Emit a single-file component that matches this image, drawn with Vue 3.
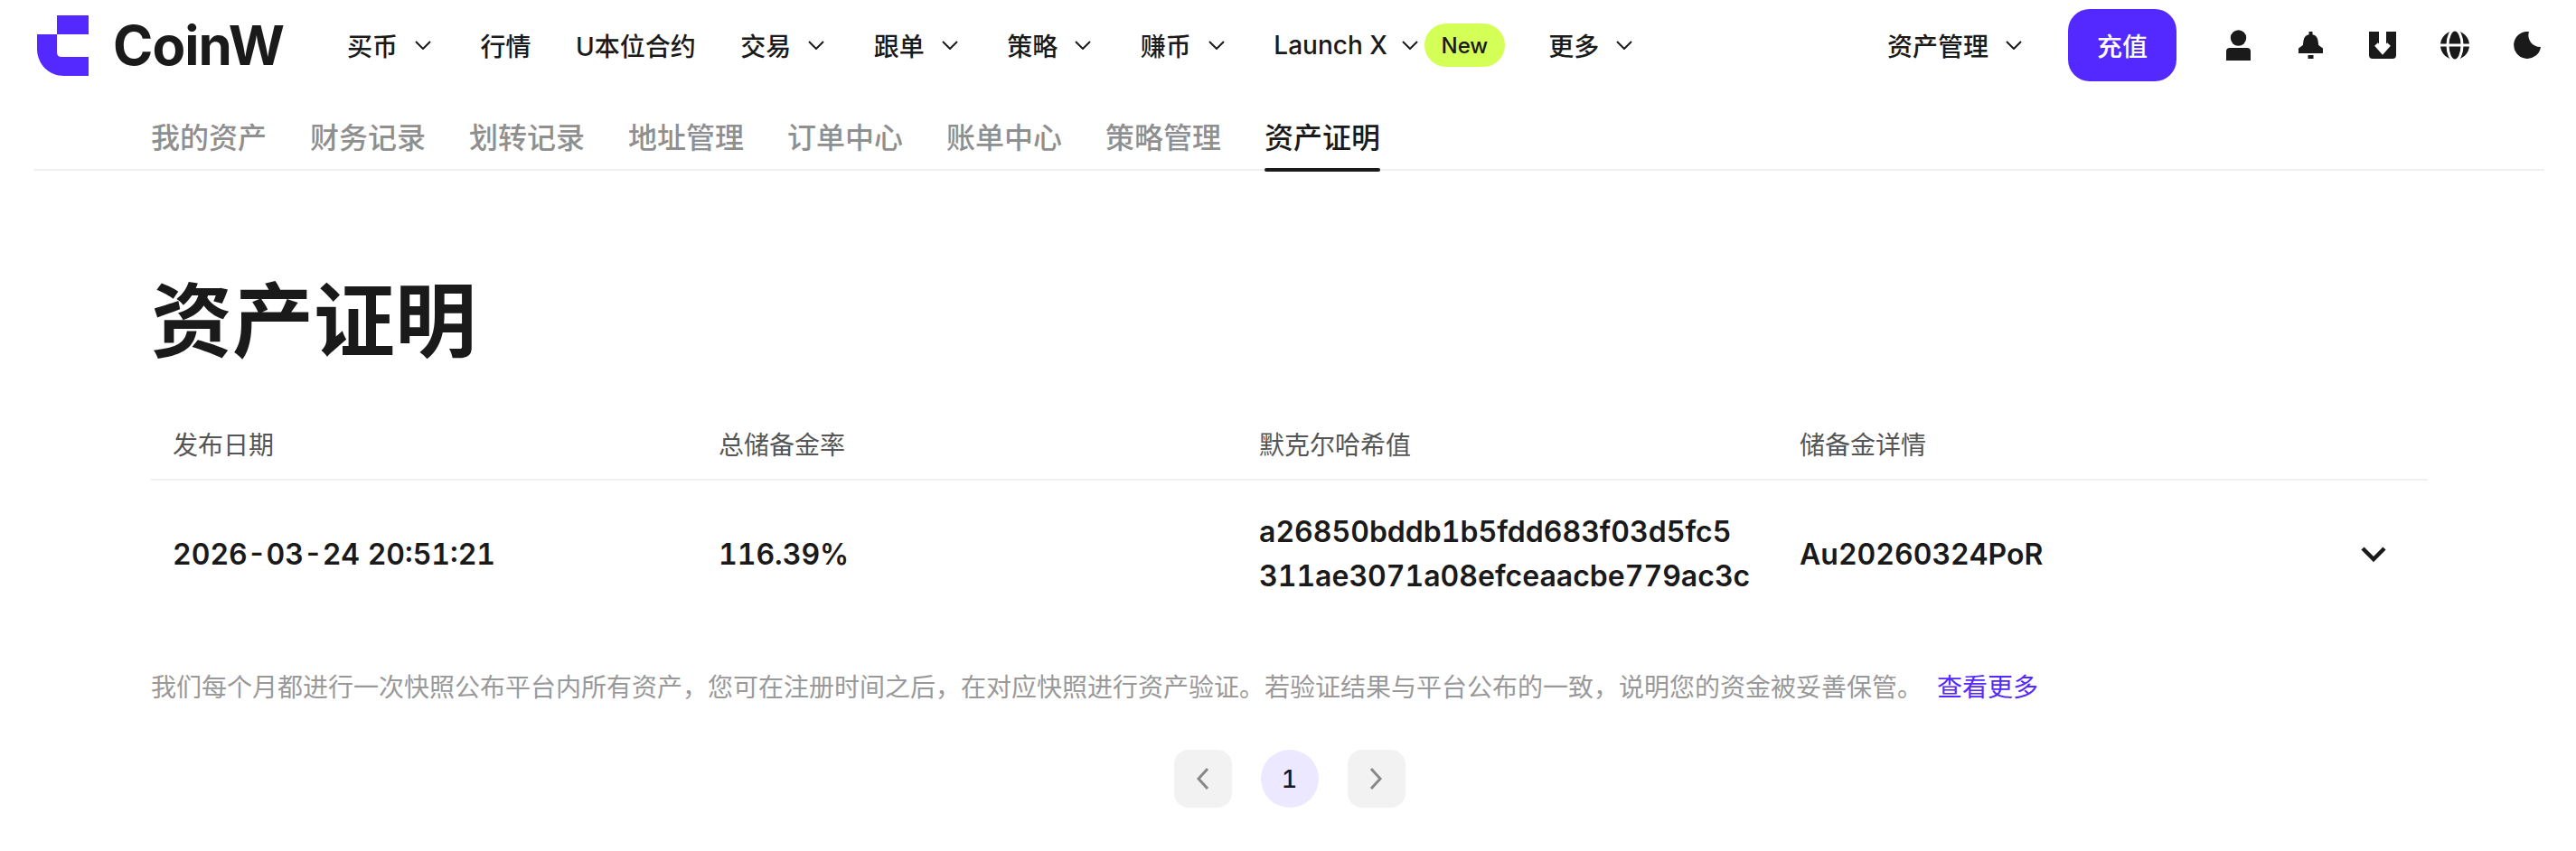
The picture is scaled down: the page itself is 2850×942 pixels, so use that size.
<template>
  <div class="page">
    <header class="topbar">
      <a class="logo">
        <svg width="57" height="67" viewBox="0 0 57 67">
          <path fill="#5429ff" d="M22 0H57V21H22Z" />
          <path fill="#5429ff" d="M0 21H22V41Q22 46 27 46H57V67H30C13 67 0 54 0 37Z" />
        </svg>
        <span class="logo-text">CoinW</span>
      </a>
      <nav class="menu">
        <div v-for="item in menu" :key="item.label" class="menu-item" :class="{ 'has-badge': item.badge }">
          <span>{{ item.label }}</span>
          <span v-if="item.arrow" class="arrow">
            <svg width="18" height="10" viewBox="0 0 18 10"><path d="M1 1l8 8 8-8" fill="none" stroke="#1a1a1a" stroke-width="2" /></svg>
          </span>
          <span v-if="item.badge" class="badge">{{ item.badge }}</span>
        </div>
      </nav>
      <div class="right">
        <div class="menu-item">
          <span>资产管理</span>
          <span class="arrow">
            <svg width="18" height="10" viewBox="0 0 18 10"><path d="M1 1l8 8 8-8" fill="none" stroke="#1a1a1a" stroke-width="2" /></svg>
          </span>
        </div>
        <button class="deposit">充值</button>
        <div class="icons">
          <span class="icon">
            <svg width="27" height="34" viewBox="0 0 27 34">
              <circle cx="13.5" cy="9" r="8.7" fill="#1a1a1a" />
              <path fill="#1a1a1a" d="M0 24a4 4 0 0 1 4-4h19a4 4 0 0 1 4 4v10H0z" />
            </svg>
          </span>
          <span class="icon">
            <svg width="27" height="30" viewBox="0 0 27 30">
              <path fill="#1a1a1a" d="M11.500 0h4v3.200c3.500 .8 5.500 3 6 6.800l.7 5 4.800 3.500V24H0v-5.500L4.800 15l.7-5c.5-3.800 2.500-6 6-6.800z" />
              <rect x="10.500" y="26" width="6" height="4" fill="#1a1a1a" />
            </svg>
          </span>
          <span class="icon">
            <svg width="30" height="30" viewBox="0 0 30 30">
              <path fill="#1a1a1a" d="M0 0h30v26a4 4 0 0 1-4 4H4a4 4 0 0 1-4-4z" />
              <path fill="none" stroke="#fff" stroke-width="8" d="M15 0V20" />
              <path fill="none" stroke="#fff" stroke-width="5" d="M8 14l7 8 7-8" />
            </svg>
          </span>
          <span class="icon">
            <svg width="32" height="32" viewBox="0 0 32 32">
              <circle cx="16" cy="16" r="16" fill="#1a1a1a" />
              <ellipse cx="16" cy="16" rx="8" ry="17" fill="none" stroke="#fff" stroke-width="3" />
              <path d="M0 16H32" stroke="#fff" stroke-width="3" />
            </svg>
          </span>
          <span class="icon">
            <svg width="30" height="30" viewBox="0 0 30 30">
              <path fill="#1a1a1a" d="M17 0A15 15 0 1 0 30 17A13 13 0 0 1 17 0Z" />
            </svg>
          </span>
        </div>
      </div>
    </header>

    <div class="tabs">
      <a v-for="(tab, i) in tabs" :key="tab" class="tab" :class="{ active: i === tabs.length - 1 }">{{ tab }}</a>
    </div>

    <main class="content">
      <h1>资产证明</h1>
      <div class="table-head">
        <div v-for="col in columns" :key="col">{{ col }}</div>
      </div>
      <div class="table-row">
        <div>2026-03-24 20:51:21</div>
        <div>116.39%</div>
        <div class="hash">
          <div>a26850bddb1b5fdd683f03d5fc5</div>
          <div>311ae3071a08efceaacbe779ac3c</div>
        </div>
        <div>Au20260324PoR</div>
        <div class="expand">
          <svg width="30" height="18" viewBox="0 0 30 18"><path d="M3 3l12 12 12-12" fill="none" stroke="#1a1a1a" stroke-width="4.500" /></svg>
        </div>
      </div>
      <p class="note">
        我们每个月都进行一次快照公布平台内所有资产，您可在注册时间之后，在对应快照进行资产验证。若验证结果与平台公布的一致，说明您的资金被妥善保管。<a>查看更多</a>
      </p>
      <div class="pager">
        <button class="page-btn">
          <svg width="15" height="24" viewBox="0 0 15 24"><path d="M13 1L3 12l10 11" fill="none" stroke="#888" stroke-width="3" /></svg>
        </button>
        <button class="page-btn current">1</button>
        <button class="page-btn">
          <svg width="15" height="24" viewBox="0 0 15 24"><path d="M2 1l10 11L2 23" fill="none" stroke="#888" stroke-width="3" /></svg>
        </button>
      </div>
    </main>
  </div>
</template>

<script setup>
const menu = [
  { label: '买币', arrow: true },
  { label: '行情' },
  { label: 'U本位合约' },
  { label: '交易', arrow: true },
  { label: '跟单', arrow: true },
  { label: '策略', arrow: true },
  { label: '赚币', arrow: true },
  { label: 'Launch X', arrow: true, badge: 'New' },
  { label: '更多', arrow: true }
]

const tabs = ['我的资产', '财务记录', '划转记录', '地址管理', '订单中心', '账单中心', '策略管理', '资产证明']

const columns = ['发布日期', '总储备金率', '默克尔哈希值', '储备金详情']
</script>

<style>
html, body {
  margin: 0;
  background: #fff;
}
</style>

<style scoped>
.page {
  font-family: Inter, "Noto Sans CJK SC", sans-serif;
  color: #1a1a1a;
  overflow: hidden;
  height: 942px;
}
.topbar {
  height: 100px;
  display: flex;
  align-items: center;
  padding: 0 36px 0 41px;
}
.logo {
  display: flex;
  align-items: center;
  gap: 27px;
  margin-right: 70px;
}
.logo-text {
  font-size: 60px;
  font-weight: 700;
  letter-spacing: -1px;
  line-height: 67px;
}
.menu {
  display: flex;
  align-items: center;
  gap: 49.5px;
}
.menu-item {
  display: flex;
  align-items: center;
  font-size: 28px;
  font-weight: 500;
  white-space: nowrap;
}
.arrow {
  width: 28px;
  margin-left: 14px;
  display: flex;
  justify-content: center;
}
.has-badge .arrow {
  margin-left: 11px;
}
.badge {
  width: 89px;
  height: 48px;
  margin: 0 -1px 0 2px;
  border-radius: 24px;
  background: #d4ff57;
  font-size: 24px;
  display: flex;
  align-items: center;
  justify-content: center;
}
.right {
  margin-left: auto;
  display: flex;
  align-items: center;
}
.deposit {
  width: 120px;
  height: 80px;
  margin-left: 46px;
  border: none;
  border-radius: 24px;
  background: #5429ff;
  color: #fff;
  font-family: inherit;
  font-size: 28px;
  font-weight: 500;
}
.icons {
  display: flex;
  align-items: center;
  gap: 44px;
  margin-left: 50px;
}
.icon {
  width: 36px;
  display: flex;
  justify-content: center;
}
.tabs {
  height: 87px;
  margin: 0 35px 0 37px;
  padding-left: 130px;
  display: flex;
  gap: 48px;
  border-bottom: 2px solid #f0f0f0;
}
.tab {
  position: relative;
  font-size: 32px;
  font-weight: 500;
  line-height: 106px;
  height: 87px;
  color: #8f8f8f;
}
.tab.active {
  color: #1a1a1a;
}
.tab.active::after {
  content: "";
  position: absolute;
  left: 0;
  right: 0;
  bottom: -3px;
  height: 4px;
  border-radius: 2px;
  background: #1a1a1a;
}
.content {
  padding: 122px 164px 0 167px;
}
h1 {
  margin: 0;
  font-size: 90px;
  line-height: 90px;
  font-weight: 700;
}
.table-head,
.table-row {
  display: grid;
  grid-template-columns: 604px 598px 598px 1fr;
  padding-left: 24px;
}
.table-head {
  margin-top: 53px;
  height: 78px;
  box-sizing: border-box;
  padding-bottom: 3px;
  align-items: center;
  border-bottom: 2px solid #f0f0f0;
  font-size: 28px;
  color: #555;
}
.table-row {
  grid-template-columns: 604px 598px 598px 1fr 75px;
  height: 162px;
  align-items: center;
  font-size: 32px;
  font-weight: 600;
  font-feature-settings: "tnum";
}
.hash {
  line-height: 49px;
  white-space: nowrap;
}
.expand {
  display: flex;
}
.note {
  margin: 46px 0 0;
  font-size: 28px;
  line-height: 42px;
  color: #999;
}
.note a {
  margin-left: 16px;
  color: #5429ff;
}
.pager {
  display: flex;
  justify-content: center;
  gap: 32px;
  margin-top: 48px;
}
.page-btn {
  width: 64px;
  height: 64px;
  padding: 0;
  border: none;
  border-radius: 16px;
  background: #f2f2f2;
  display: flex;
  align-items: center;
  justify-content: center;
  font-family: inherit;
  font-size: 27px;
  font-weight: 500;
  font-feature-settings: "tnum";
  color: #1a1a1a;
}
.page-btn.current {
  border-radius: 50%;
  background: #ece8ff;
}
</style>
